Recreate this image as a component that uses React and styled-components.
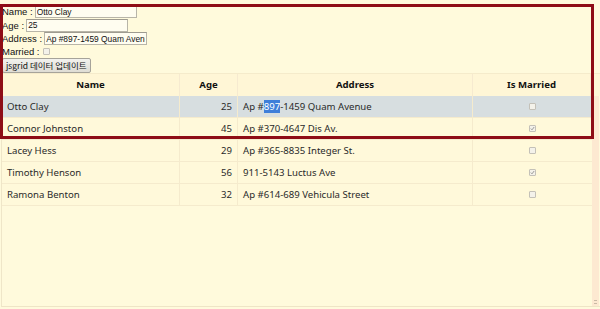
import React from "react";
import styled, { createGlobalStyle } from "styled-components";

const GlobalStyle = createGlobalStyle`
	html, body {
		margin: 0;
		padding: 0;
		background: #fffadc;
	}
`;

const Page = styled.div`
	position: relative;
	width: 600px;
	height: 309px;
	overflow: hidden;
	background: #fffadc;
	font-family: "Noto Sans", "Noto Sans CJK KR", sans-serif;
	color: #222;
`;

const Form = styled.div`
	display: flex;
	flex-direction: column;
	align-items: flex-start;
	padding: 5px 0 0 2px;
	font-family: "Liberation Sans", "Noto Sans CJK KR", sans-serif;
	font-size: 9.5px;
	color: #111;
`;

const Field = styled.label`
	display: flex;
	align-items: center;
	height: ${(p) => p.h || 13.5}px;
	white-space: nowrap;
`;

const TextInput = styled.input`
	box-sizing: border-box;
	width: ${(p) => p.w}px;
	height: 13px;
	margin-left: 2px;
	padding: 0 1px;
	border: 1px solid #b8b5a8;
	border-top-color: #9e9b90;
	background: #fffdf0;
	font-family: "Liberation Sans", sans-serif;
	font-size: 8.4px;
	color: #111;
	outline: none;
`;

const SmallBox = styled.span`
	display: inline-block;
	box-sizing: border-box;
	width: 7px;
	height: 7px;
	margin-left: ${(p) => p.ml || 0}px;
	border: 1px solid #c4c1b8;
	border-radius: 1px;
	background: #f4f2ea;
	position: relative;
	vertical-align: middle;
`;

const Tick = styled.svg`
	position: absolute;
	left: 0;
	top: 0;
`;

const Button = styled.button`
	height: 15px;
	margin-top: 1px;
	padding: 0 3px;
	border: 1px solid #a6a39a;
	border-radius: 2px;
	background: linear-gradient(#f3f2ee, #dedcd4);
	font-family: "Noto Sans CJK KR", sans-serif;
	font-size: 8.5px;
	line-height: 12px;
	color: #111;
`;

const Grid = styled.div`
	margin-top: 0;
	font-size: 9.6px;
`;

const cols = "178px 58px 235px 118px 9px";

const HeaderRow = styled.div`
	display: grid;
	grid-template-columns: ${cols};
	height: 22px;
	margin-left: 2px;
	border-top: 1px solid #f5ebcb;
	background: #fff6d6;
`;

const HeadCell = styled.div`
	display: flex;
	align-items: center;
	justify-content: center;
	font-weight: 700;
	color: #111;
	border-right: ${(p) => (p.last ? "none" : "1px solid #f6ead0")};
`;

const Body = styled.div`
	display: flex;
	height: 210px;
	margin-left: 1px;
	border-left: 1px solid #efe6c8;
	border-bottom: 1px solid #efe4c6;
`;

const Rows = styled.div`
	width: 590px;
`;

const Row = styled.div`
	display: grid;
	grid-template-columns: 178px 58px 235px 119px;
	height: 22px;
	background: ${(p) => (p.selected ? "#d7dee0" : "#fff9da")};
	border-bottom: 1px solid #f5ebcd;
	box-sizing: border-box;
	color: #2a2a2a;
`;

const Cell = styled.div`
	display: flex;
	align-items: center;
	justify-content: ${(p) => p.align || "flex-start"};
	padding: 0 5px;
	white-space: nowrap;
	overflow: hidden;
	border-right: ${(p) => (p.last ? "none" : "1px solid #f5ebcd")};
`;

const Highlight = styled.span`
	background: #3f7fd9;
	color: #fff;
`;

const Scrollbar = styled.div`
	width: 7px;
	background: #fde9d1;
	display: flex;
	flex-direction: column;
	justify-content: flex-end;
	align-items: center;
	padding-bottom: 2px;
`;

const Grip = styled.div`
	width: 3px;
	height: 2px;
	border-top: 1px solid #c9b9a5;
	border-bottom: 1px solid #c9b9a5;
`;

const Outline = styled.div`
	position: absolute;
	left: 0;
	top: 4px;
	width: 594px;
	height: 135px;
	box-sizing: border-box;
	border: 3px solid #8e0d16;
	pointer-events: none;
`;

const Check = ({ checked, ml }) => (
	<SmallBox ml={ml}>
		{checked && (
			<Tick width="5" height="5" viewBox="0 0 5 5">
				<path d="M0.8 2.6 L2 3.8 L4.2 1" stroke="#8f8f8f" strokeWidth="0.9" fill="none" />
			</Tick>
		)}
	</SmallBox>
);

const data = [
	{ name: "Otto Clay", age: 25, address: "Ap #897-1459 Quam Avenue", married: false, selected: true },
	{ name: "Connor Johnston", age: 45, address: "Ap #370-4647 Dis Av.", married: true },
	{ name: "Lacey Hess", age: 29, address: "Ap #365-8835 Integer St.", married: false },
	{ name: "Timothy Henson", age: 56, address: "911-5143 Luctus Ave", married: true },
	{ name: "Ramona Benton", age: 32, address: "Ap #614-689 Vehicula Street", married: false },
];

const renderAddress = (row) => {
	if (!row.selected) return row.address;
	return (
		<>
			Ap #<Highlight>897</Highlight>-1459 Quam Avenue
		</>
	);
};

export default function App() {
	return (
		<Page>
			<GlobalStyle />
			<Form>
				<Field>
					Name :<TextInput w={102} defaultValue="Otto Clay" />
				</Field>
				<Field>
					Age :<TextInput w={102} defaultValue="25" />
				</Field>
				<Field>
					Address :<TextInput w={103} defaultValue="Ap #897-1459 Quam Avenue" />
				</Field>
				<Field h={11}>
					Married :<Check ml={4} />
				</Field>
				<Button>jsgrid 데이터 업데이트</Button>
			</Form>
			<Grid>
				<HeaderRow>
					<HeadCell>Name</HeadCell>
					<HeadCell>Age</HeadCell>
					<HeadCell>Address</HeadCell>
					<HeadCell>Is Married</HeadCell>
					<HeadCell last />
				</HeaderRow>
				<Body>
					<Rows>
						{data.map((row) => (
							<Row key={row.name} selected={row.selected}>
								<Cell>{row.name}</Cell>
								<Cell align="flex-end">{row.age}</Cell>
								<Cell>{renderAddress(row)}</Cell>
								<Cell align="center" last>
									<Check checked={row.married} />
								</Cell>
							</Row>
						))}
					</Rows>
					<Scrollbar>
						<Grip />
					</Scrollbar>
				</Body>
			</Grid>
			<Outline />
		</Page>
	);
}
